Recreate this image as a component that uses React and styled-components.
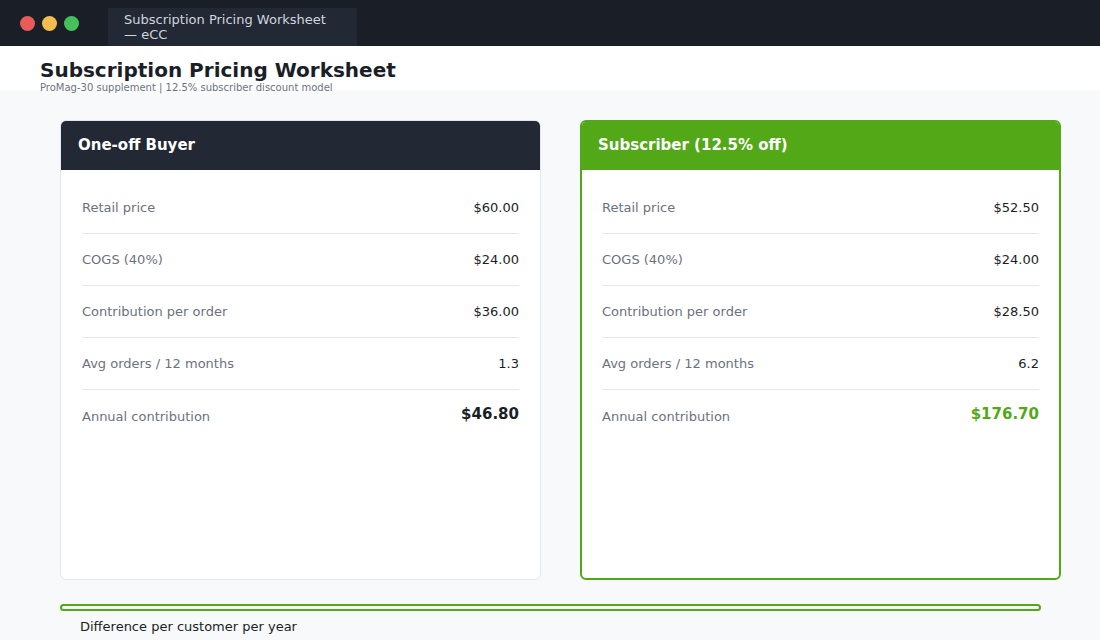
import React from 'react';
import styled, { createGlobalStyle } from 'styled-components';

const Global = createGlobalStyle`
  html, body { margin: 0; padding: 0; }
  body { font-family: "DejaVu Sans", sans-serif; background: #f8f9fb; width: 1100px; height: 640px; overflow: hidden; }
`;

const TitleBar = styled.div`
  height: 46px; background: #1a1e26; display: flex; align-items: center; padding-left: 20px;
`;
const Dot = styled.span`
  width: 15px; height: 15px; border-radius: 50%; background: ${p => p.c}; margin-right: 7px;
`;
const Tab = styled.div`
  margin-left: 22px; align-self: flex-end; height: 38px; background: #222834; color: #d0d5de;
  font-size: 13px; display: flex; align-items: center; padding: 0 16px; width: 249px; box-sizing: border-box;
`;
const Header = styled.div`
  background: #fff; height: 44px; padding: 12px 40px 0; box-sizing: border-box;
`;
const H1 = styled.h1`
  margin: 0; font-size: 20px; font-weight: 700; color: #1a1e26; line-height: 24px;
`;
const Sub = styled.div`
  font-size: 10px; color: #6b7280; line-height: 12px; margin-top: 0px;
`;
const Cards = styled.div`
  display: flex; gap: 39px; padding: 30px 39px 0 60px;
`;
const Card = styled.div`
  flex: 0 0 481px; height: 460px; box-sizing: border-box; background: #fff; border-radius: 6px;
  border: ${p => p.green ? '2px solid #52a817' : '1px solid #e3e6ec'}; overflow: hidden;
`;
const CardHead = styled.div`
  height: 50px; background: ${p => p.green ? '#52a817' : '#222834'}; color: #fff; font-weight: 700;
  font-size: 15px; display: flex; align-items: center; padding: 0 18px;
  margin: ${p => p.green ? '-2px -2px 0' : '-1px -1px 0'};
`;
const Body = styled.div`
  padding: 12px ${p => p.green ? 20 : 21}px 0 ${p => p.green ? 20 : 21}px;
`;
const Row = styled.div`
  display: flex; justify-content: space-between; align-items: center; height: 52px;
  border-bottom: ${p => p.last ? 'none' : '1px solid #e5e7eb'}; box-sizing: border-box;
`;
const Label = styled.span` font-size: 13px; color: #6b7280; `;
const Value = styled.span`
  font-size: ${p => p.big ? '15px' : '13px'}; font-weight: ${p => p.big ? 700 : 400};
  color: ${p => p.green ? '#52a817' : '#1a1e26'}; margin-top: ${p => p.big ? '-4px' : 0};
`;
const Diff = styled.div`
  margin: 24px 59px 0 60px; height: 7px; box-sizing: border-box; border: 2px solid #52a817; border-radius: 4px;
`;
const DiffLabel = styled.div`
  margin: 8px 0 0 80px; font-size: 13px; color: #1a1e26;
`;

const one = [['Retail price', '$60.00'], ['COGS (40%)', '$24.00'], ['Contribution per order', '$36.00'], ['Avg orders / 12 months', '1.3'], ['Annual contribution', '$46.80']];
const sub = [['Retail price', '$52.50'], ['COGS (40%)', '$24.00'], ['Contribution per order', '$28.50'], ['Avg orders / 12 months', '6.2'], ['Annual contribution', '$176.70']];

const PriceCard = ({ title, rows, green }) => (
  <Card green={green}>
    <CardHead green={green}>{title}</CardHead>
    <Body green={green}>
      {rows.map(([l, v], i) => {
        const last = i === rows.length - 1;
        return (
          <Row key={l} last={last}>
            <Label>{l}</Label>
            <Value big={last} green={green && last}>{v}</Value>
          </Row>
        );
      })}
    </Body>
  </Card>
);

export default function App() {
  return (
    <>
      <Global />
      <TitleBar>
        <Dot c="#e95b57" /><Dot c="#f5bd4f" /><Dot c="#45c15a" />
        <Tab>Subscription Pricing Worksheet — eCC</Tab>
      </TitleBar>
      <Header>
        <H1>Subscription Pricing Worksheet</H1>
        <Sub>ProMag-30 supplement | 12.5% subscriber discount model</Sub>
      </Header>
      <Cards>
        <PriceCard title="One-off Buyer" rows={one} />
        <PriceCard title="Subscriber (12.5% off)" rows={sub} green />
      </Cards>
      <Diff />
      <DiffLabel>Difference per customer per year</DiffLabel>
    </>
  );
}
